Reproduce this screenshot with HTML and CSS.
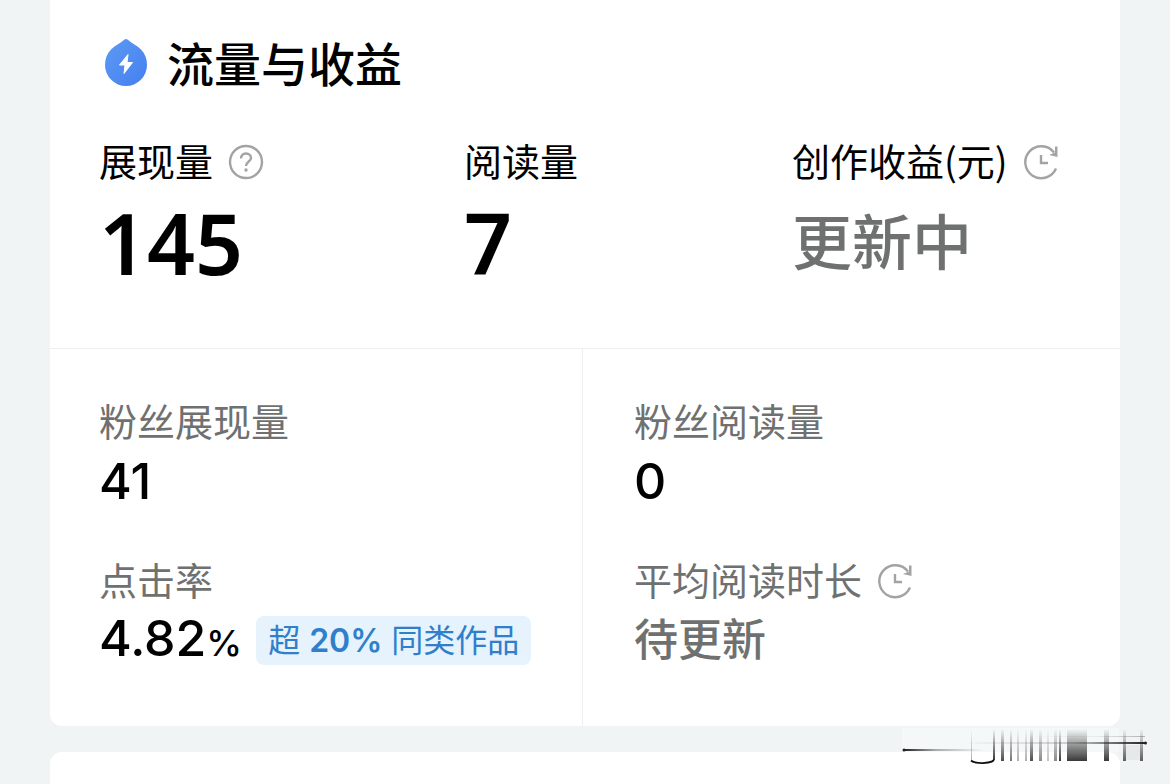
FILE: index.html
```html
<!DOCTYPE html>
<html lang="zh-CN">
<head>
    <meta charset="UTF-8">
    <meta name="viewport" content="width=device-width, initial-scale=1.0">
    <title>流量与收益</title>
    <link rel="stylesheet" href="styles.css">
</head>
<body>
    <svg class="symbols" aria-hidden="true">
        <symbol id="icon-refresh" viewBox="0 0 36 36">
            <g fill="none" stroke="currentColor" stroke-width="2.4">
                <path d="M33 24.500A16 16 0 1 1 31 8.500"/>
                <path d="M18 11v8h7"/>
            </g>
            <path fill="currentColor" d="M32 2.500H34.500V13L26 11L32 8.500z"/>
        </symbol>
    </svg>

    <main class="page">
        <section class="card">
            <header class="card-header">
                <svg class="drop" viewBox="0 0 44 50" aria-hidden="true">
                    <defs>
                        <linearGradient id="dropFill" x1="0" y1="0" x2="1" y2="1">
                            <stop offset="0" stop-color="#5c9af5"/>
                            <stop offset="1" stop-color="#4580ee"/>
                        </linearGradient>
                    </defs>
                    <path fill="url(#dropFill)" d="M20.500 1.500Q22 .5 23.500 1.500C28 5.500 33 7.500 37 11.500C41 15.500 43 21 43 27A21 21 0 0 1 1 27C1 21 3 15.500 7 11.500C11 7.500 16 5.500 20.500 1.500Z"/>
                    <path fill="#fff" stroke="#fff" stroke-linejoin="round" d="M24 16.500L15.500 27h5.500l-1 8.500L28.500 24.500h-5.500z"/>
                </svg>
                <h1>流量与收益</h1>
            </header>

            <div class="summary">
                <div class="metric">
                    <div class="label">
                        展现量
                        <button class="icon-btn" type="button" aria-label="展现量说明">
                            <svg viewBox="0 0 36 36" fill="none" stroke="currentColor" stroke-width="2.4">
                                <circle cx="18" cy="18" r="16"/>
                                <path d="M13 14.500C13 11.500 15 9.500 18 9.500S23 11.500 23 14C23 17.500 18 17.500 18 22"/>
                                <circle cx="18" cy="26" r="1.700" fill="currentColor" stroke="none"/>
                            </svg>
                        </button>
                    </div>
                    <div class="total">145</div>
                </div>
                <div class="metric">
                    <div class="label">阅读量</div>
                    <div class="total">7</div>
                </div>
                <div class="metric">
                    <div class="label">
                        创作收益(元)
                        <svg class="icon" aria-hidden="true"><use href="#icon-refresh"/></svg>
                    </div>
                    <div class="total pending">更新中</div>
                </div>
            </div>

            <div class="details">
                <div class="column">
                    <div class="metric">
                        <div class="label muted">粉丝展现量</div>
                        <div class="value">41</div>
                    </div>
                    <div class="metric">
                        <div class="label muted">点击率</div>
                        <div class="value">
                            <span>4.82<small>%</small></span>
                            <span class="badge">超 <b>20%</b> 同类作品</span>
                        </div>
                    </div>
                </div>
                <div class="column">
                    <div class="metric">
                        <div class="label muted">粉丝阅读量</div>
                        <div class="value">0</div>
                    </div>
                    <div class="metric">
                        <div class="label muted">
                            平均阅读时长
                            <svg class="icon" aria-hidden="true"><use href="#icon-refresh"/></svg>
                        </div>
                        <div class="value pending">待更新</div>
                    </div>
                </div>
            </div>
        </section>

        <section class="card next-card"></section>

        <svg class="mark" viewBox="0 0 246 38" aria-hidden="true">
            <defs>
                <linearGradient id="fadeDown" x1="0" y1="0" x2="0" y2="1">
                    <stop offset="0" stop-color="#222" stop-opacity="0"/>
                    <stop offset=".5" stop-color="#222" stop-opacity=".45"/>
                    <stop offset="1" stop-color="#222" stop-opacity=".9"/>
                </linearGradient>
                <linearGradient id="fadeRight" x1="0" y1="0" x2="1" y2="0">
                    <stop offset="0" stop-color="#222"/>
                    <stop offset=".4" stop-color="#222" stop-opacity=".35"/>
                    <stop offset="1" stop-color="#222" stop-opacity="0"/>
                </linearGradient>
                <linearGradient id="fadeLeft" x1="0" y1="0" x2="1" y2="0">
                    <stop offset="0" stop-color="#222" stop-opacity="0"/>
                    <stop offset=".6" stop-color="#222" stop-opacity=".2"/>
                    <stop offset="1" stop-color="#222"/>
                </linearGradient>
            </defs>
            <rect x="0" y="1" width="217" height="24" fill="#fff" opacity=".35"/>
            <rect x="2" y="22" width="80" height="2" fill="url(#fadeRight)"/>
            <rect x="60" y="15" width="184" height="2" fill="url(#fadeLeft)"/>
            <rect x="120" y="9" width="123" height="1" fill="url(#fadeLeft)" opacity=".3"/>
            <circle cx="2" cy="23" r="1.500" fill="#222"/>
            <circle cx="243.500" cy="16" r="1.500" fill="#222"/>
            <rect x="224" y="18" width="14" height="15" fill="#222" opacity=".05"/>
            <g fill="url(#fadeDown)">
                <rect x="69" y="2" width="1" height="31" opacity=".4"/>
                <rect x="91" y="2" width="2" height="31"/>
                <rect x="99" y="2" width="3" height="32" opacity=".9"/>
                <rect x="108" y="2" width="2" height="32" opacity=".7"/>
                <rect x="115" y="2" width="2" height="32" opacity=".4"/>
                <rect x="123" y="2" width="2" height="32" opacity=".4"/>
                <rect x="128" y="2" width="3" height="32" opacity=".9"/>
                <rect x="137" y="2" width="3" height="32" opacity=".6"/>
                <rect x="145" y="2" width="2" height="32" opacity=".3"/>
                <rect x="152" y="2" width="3" height="32" opacity=".6"/>
                <rect x="157" y="2" width="2" height="32"/>
                <rect x="165" y="2" width="20" height="32"/>
                <rect x="202" y="2" width="5" height="32"/>
                <rect x="221" y="2" width="3" height="32" opacity=".8"/>
                <rect x="238" y="2" width="3" height="32" opacity=".8"/>
            </g>
            <path d="M69 33.500C73 37 88 37 92 33" fill="none" stroke="#111" stroke-width="1.800"/>
        </svg>
    </main>
</body>
</html>
```
FILE: styles.css
```css
* {
    margin: 0;
    padding: 0;
    box-sizing: border-box;
}

body {
    font-family: Inter, "Noto Sans CJK SC", sans-serif;
    background: #f0f4f5;
    color: #000;
    overflow: hidden;
}

.symbols {
    display: none;
}

.page {
    position: relative;
    height: 100vh;
    padding: 0 50px;
    overflow: hidden;
}

.card {
    background: #fff;
    border-radius: 0 0 12px 12px;
}

.next-card {
    height: 120px;
    margin-top: 26px;
    border-radius: 12px;
}

.card-header {
    display: flex;
    align-items: center;
    gap: 19px;
    padding: 32px 54px 0;
    height: 94px;
}

.card-header h1 {
    padding-top: 4px;
    font-size: 47px;
    font-weight: 500;
    line-height: 60px;
}

.drop {
    width: 44px;
    height: 50px;
}

.summary {
    display: grid;
    grid-template-columns: 365fr 328fr 278fr;
    padding: 44px 50px 60px 49px;
}

.label {
    display: flex;
    align-items: center;
    gap: 15px;
    height: 48px;
    font-family: "Noto Sans CJK SC", sans-serif;
    font-size: 38px;
    line-height: 44px;
    padding-bottom: 4px;
    white-space: nowrap;
}

.muted {
    color: #6f7171;
}

.icon-btn {
    display: flex;
    border: none;
    background: none;
    color: #a3a3a3;
    cursor: pointer;
}

.icon,
.icon-btn svg {
    width: 36px;
    height: 36px;
    margin-top: 4px;
    color: #a3a3a3;
}

.total {
    height: 90px;
    margin-top: 12px;
    font-family: "Noto Sans", sans-serif;
    font-size: 84px;
    font-weight: 600;
    line-height: 90px;
}

.pending {
    color: #6f7171;
}

.total.pending {
    font-family: "Noto Sans CJK SC", sans-serif;
    font-size: 60px;
    font-weight: 500;
    line-height: 82px;
}

.details {
    display: grid;
    grid-template-columns: 532fr 538fr;
    border-top: 1px solid #eef0f0;
}

.column {
    display: flex;
    flex-direction: column;
    gap: 48px;
    padding: 49px 49px 58px;
}

.column + .column {
    padding-left: 51px;
    border-left: 1px solid #eef0f0;
}

.value {
    display: flex;
    align-items: center;
    gap: 14px;
    height: 56px;
    margin-top: 7px;
    font-size: 50px;
    font-weight: 500;
    line-height: 56px;
    white-space: nowrap;
}

.value small {
    font-size: 36px;
}

.value.pending {
    font-size: 44px;
    line-height: 60px;
}

.badge {
    padding: 0 12px;
    border-radius: 8px;
    background: #e6f2fc;
    color: #2f7fcb;
    font-size: 32px;
    font-weight: 400;
    line-height: 49px;
}

.badge b {
    font-weight: 600;
}

.mark {
    position: absolute;
    right: 22px;
    top: 727px;
    width: 246px;
    height: 38px;
}
```
